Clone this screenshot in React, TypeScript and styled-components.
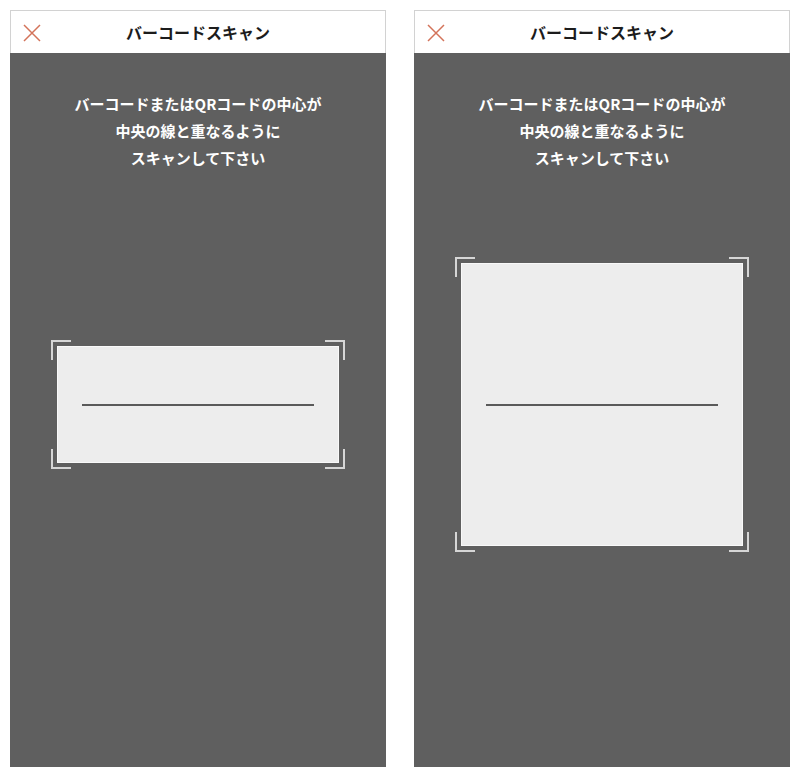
import React from "react";
import styled, { createGlobalStyle } from "styled-components";

const GlobalStyle = createGlobalStyle`
  html, body {
    margin: 0;
    padding: 0;
    background: #ffffff;
    font-family: "Noto Sans CJK JP", "Noto Sans", sans-serif;
  }
`;

const Page = styled.div`
  display: flex;
  gap: 28px;
  padding: 10px 0 0 10px;
  width: 800px;
  height: 777px;
  box-sizing: border-box;
  background: #ffffff;
`;

const Phone = styled.div`
  width: 376px;
  height: 757px;
  display: flex;
  flex-direction: column;
`;

const Header = styled.div`
  height: 43px;
  flex-shrink: 0;
  display: flex;
  align-items: center;
  justify-content: center;
  position: relative;
  background: #ffffff;
  border: 1px solid #d2d2d2;
  border-bottom: none;
  box-sizing: border-box;
`;

const CloseButton = styled.button`
  position: absolute;
  left: 11px;
  top: 12px;
  width: 20px;
  height: 20px;
  padding: 0;
  border: none;
  background: transparent;
  display: flex;
  align-items: center;
  justify-content: center;
`;

const Title = styled.h1`
  margin: 0;
  font-size: 16px;
  font-weight: 700;
  color: #1c1c1c;
  letter-spacing: 0;
`;

const Body = styled.div`
  flex: 1;
  background: #5f5f5f;
  display: flex;
  flex-direction: column;
  align-items: center;
  padding-top: 37px;
`;

const Guide = styled.p`
  margin: 0;
  color: #ffffff;
  font-size: 15px;
  font-weight: 700;
  line-height: 27px;
  letter-spacing: 0;
  text-align: center;
`;

const ScanArea = styled.div`
  height: 467px;
  width: 100%;
  display: flex;
  align-items: center;
  justify-content: center;
`;

const Frame = styled.div<{ $height: number }>`
  position: relative;
  width: 282px;
  height: ${(p) => p.$height}px;
  box-sizing: border-box;
  background: #ededed;
  border: 1.5px solid #f9f9f9;
  display: flex;
  align-items: center;
  justify-content: center;
`;

const ScanLine = styled.div`
  width: 232px;
  height: 2px;
  background: #5a5a5a;
`;

const Corner = styled.span<{ $v: "top" | "bottom"; $h: "left" | "right" }>`
  position: absolute;
  width: 18px;
  height: 18px;
  ${(p) => p.$v}: -7px;
  ${(p) => p.$h}: -7px;
  border-${(p) => p.$v}: 2px solid #d6d6d6;
  border-${(p) => p.$h}: 2px solid #d6d6d6;
`;

function CloseIcon() {
  return (
    <svg width="20" height="20" viewBox="0 0 20 20">
      <path d="M2 2 L18 18 M18 2 L2 18" stroke="#d3735a" strokeWidth="1.5" fill="none" />
    </svg>
  );
}

function ScanScreen({ frameHeight }: { frameHeight: number }) {
  return (
    <Phone>
      <Header>
        <CloseButton aria-label="閉じる">
          <CloseIcon />
        </CloseButton>
        <Title>バーコードスキャン</Title>
      </Header>
      <Body>
        <Guide>
          バーコードまたはQRコードの中心が
          <br />
          中央の線と重なるように
          <br />
          スキャンして下さい
        </Guide>
        <ScanArea>
          <Frame $height={frameHeight}>
            <Corner $v="top" $h="left" />
            <Corner $v="top" $h="right" />
            <Corner $v="bottom" $h="left" />
            <Corner $v="bottom" $h="right" />
            <ScanLine />
          </Frame>
        </ScanArea>
      </Body>
    </Phone>
  );
}

export default function App() {
  return (
    <>
      <GlobalStyle />
      <Page>
        <ScanScreen frameHeight={117} />
        <ScanScreen frameHeight={283} />
      </Page>
    </>
  );
}
